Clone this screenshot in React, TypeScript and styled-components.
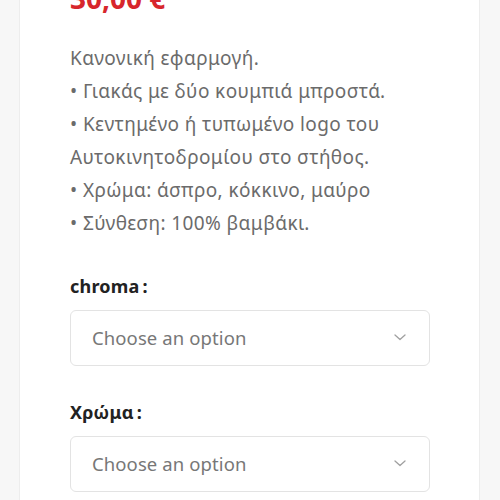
import * as React from "react";
import styled, { createGlobalStyle } from "styled-components";

const GlobalStyle = createGlobalStyle`
    html, body {
        margin: 0;
        padding: 0;
        background: #f7f7f7;
        font-family: "Noto Sans", "Open Sans", sans-serif;
        overflow: hidden;
    }
`;

const Page = styled.div`
    display: flex;
    padding: 0 20px 0 19px;
    height: 500px;
`;

const Card = styled.div`
    flex: 1;
    background: #fff;
    border-left: 1px solid #ededed;
    border-right: 1px solid #ededed;
    margin-top: -19px;
    padding: 0 0 0 50px;
`;

const Price = styled.div`
    color: #d7262c;
    font-size: 28px;
    font-weight: 700;
    line-height: 34px;
`;

const Description = styled.p`
    margin: 27px 0 0;
    color: #6b6b6b;
    font-size: 19px;
    letter-spacing: 0.4px;
    line-height: 33px;
`;

const Field = styled.div`
    display: flex;
    flex-direction: column;
    gap: 12px;
    margin-top: 34px;
`;

const Label = styled.label`
    color: #222;
    font-size: 18px;
    font-weight: 700;
    line-height: 24px;
    letter-spacing: 0.2px;
`;

const Colon = styled.span`
    margin-left: 3px;
`;

const SelectBox = styled.div`
    display: flex;
    align-items: center;
    justify-content: space-between;
    box-sizing: border-box;
    width: 360px;
    height: 56px;
    padding: 0 23px 2px 21px;
    border: 1px solid #e3e3e3;
    border-radius: 6px;
    color: #777;
    font-size: 18.5px;
    letter-spacing: 0.1px;
`;

function Chevron(props: React.SVGProps<SVGSVGElement>) {
    return (
        <svg width="12" height="7" viewBox="0 0 12 7" fill="none" {...props}>
            <path
                d="M1 1l5 4.5 5-4.5"
                stroke="#a0a0a0"
                strokeWidth={1.3}
                strokeLinecap="round"
                strokeLinejoin="round"
            />
        </svg>
    );
}

let Select = ({ label }: { label: string }) => {
    return (
        <Field>
            <Label>
                {label}
                <Colon>:</Colon>
            </Label>
            <SelectBox>
                <span>Choose an option</span>
                <Chevron />
            </SelectBox>
        </Field>
    );
};

export default function App() {
    return (
        <>
            <GlobalStyle />
            <Page>
                <Card>
                    <Price>30,00 €</Price>
                    <Description>
                        Κανονική εφαρμογή.
                        <br />• Γιακάς με δύο κουμπιά μπροστά.
                        <br />• Κεντημένο ή τυπωμένο logo του
                        <br />Αυτοκινητοδρομίου στο στήθος.
                        <br />• Χρώμα: άσπρο, κόκκινο, μαύρο
                        <br />• Σύνθεση: 100% βαμβάκι.
                    </Description>
                    <Select label="chroma" />
                    <Select label="Χρώμα" />
                </Card>
            </Page>
        </>
    );
}
